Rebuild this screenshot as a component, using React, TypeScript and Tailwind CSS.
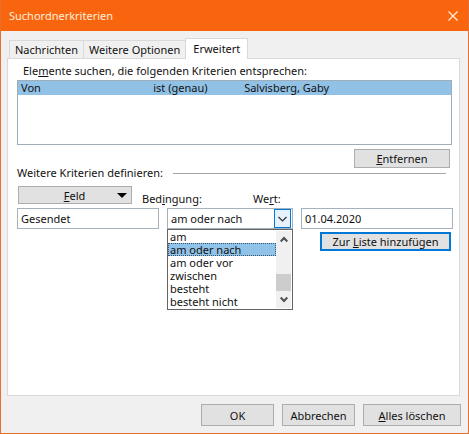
import { useState } from "react";

const tabs = ["Nachrichten", "Weitere Optionen", "Erweitert"];
const conditions = ["am", "am oder nach", "am oder vor", "zwischen", "besteht", "besteht nicht"];

const buttonStyle = "border border-[#adadad] bg-[#e1e1e1] text-center";
const fieldStyle = "h-[21px] w-full min-w-0 border border-[#a5b1bc] bg-white px-[3px] outline-none";

function TitleBar() {
    return (
        <header className="flex h-[31px] items-center justify-between bg-[#f9650f] pr-[10px] pl-2 text-[#fff0dc]">
            <h1>Suchordnerkriterien</h1>
            <button type="button" aria-label="Schließen">
                <svg width="10" height="10" viewBox="0 0 10 10" fill="none" stroke="currentColor" strokeWidth="1.2">
                    <path d="M0.5 0.5 9.5 9.5M9.5 0.5 0.5 9.5" />
                </svg>
            </button>
        </header>
    );
}

function TabBar({ active, onSelect }: { active: string; onSelect: (tab: string) => void }) {
    return (
        <div role="tablist" className="ml-[2px] flex items-end">
            {tabs.map((tab) => (
                <button
                    key={tab}
                    type="button"
                    role="tab"
                    aria-selected={tab === active}
                    onClick={() => onSelect(tab)}
                    className={
                        tab === active
                            ? "relative -mb-px h-[21px] border border-b-0 border-[#d9d9d9] bg-white px-[7px] pb-[2px]"
                            : "h-[18px] border border-r-0 border-b-0 border-[#d9d9d9] bg-[#f0f0f0] px-[5px]"
                    }
                >
                    {tab}
                </button>
            ))}
        </div>
    );
}

function ConditionSelect() {
    const [condition, setCondition] = useState("am oder nach");

    return (
        <div className="relative">
            <select
                id="condition"
                value={condition}
                onChange={(e) => setCondition(e.target.value)}
                className={`${fieldStyle} appearance-none`}
            >
                {conditions.map((c) => (
                    <option key={c}>{c}</option>
                ))}
            </select>
            <span className="pointer-events-none absolute top-px right-[2px] flex h-[19px] w-[17px] items-center justify-center border border-[#0078d7] bg-[#e5f1fb]">
                <svg width="9" height="6" viewBox="0 0 9 6" fill="none" stroke="#333" strokeWidth="1.2">
                    <path d="M0.5 1 4.5 5 8.5 1" />
                </svg>
            </span>

            <div className="absolute top-[21px] left-0 flex w-full border border-[#646464] bg-white">
                <ul role="listbox" aria-label="Bedingung" className="min-w-0 flex-1 pb-px leading-[13px]">
                    {conditions.map((c) => (
                        <li
                            key={c}
                            role="option"
                            aria-selected={c === condition}
                            onClick={() => setCondition(c)}
                            className={
                                c === condition
                                    ? "h-[13px] overflow-hidden bg-[#91c3e8] pl-[2px] outline-1 -outline-offset-1 outline-dotted outline-[#31536d]"
                                    : "h-[13px] overflow-hidden pl-[2px]"
                            }
                        >
                            {c}
                        </li>
                    ))}
                </ul>
                <div className="my-px mr-px flex w-[15px] flex-col items-center bg-[#f0f0f0]">
                    <svg width="8" height="17" viewBox="0 0 8 17" fill="none" stroke="#505050" strokeWidth="2">
                        <path d="M0.7 10.5 4 7 7.3 10.5" />
                    </svg>
                    <div className="mt-[26px] h-[17px] w-full bg-[#cdcdcd]" />
                    <svg width="8" height="17" viewBox="0 0 8 17" fill="none" stroke="#505050" strokeWidth="2">
                        <path d="M0.7 6.5 4 10 7.3 6.5" />
                    </svg>
                </div>
            </div>
        </div>
    );
}

export default function App() {
    const [activeTab, setActiveTab] = useState("Erweitert");

    return (
        <div className="flex min-h-screen flex-col border border-t-0 border-[#e5702e] bg-[#f0f0f0] font-['Noto_Sans','Open_Sans',sans-serif] text-[11px] leading-[15px] text-[#111]">
            <TitleBar />

            <main className="flex flex-1 flex-col px-[6px] pt-[7px] pr-[8px]">
                <TabBar active={activeTab} onSelect={setActiveTab} />

                <section role="tabpanel" className="flex-1 border border-[#d9d9d9] bg-white pt-[4px] pr-[6px] pl-[9px]">
                    <h2 id="criteria" className="pl-[6px]">
                        Ele<u>m</u>ente suchen, die folgenden Kriterien entsprechen:
                    </h2>
                    <div className="mt-[2px] mr-px h-[65px] border border-[#9dadba] bg-white">
                        <table aria-labelledby="criteria" className="w-full table-fixed text-left">
                            <tbody>
                                <tr className="h-[14px] bg-[#91c1e5] leading-[14px]">
                                    <td className="w-[31%] p-0 pl-[3px]">Von</td>
                                    <td className="w-[21%] p-0 pl-px">ist (genau)</td>
                                    <td className="p-0 pl-px">Salvisberg, Gaby</td>
                                </tr>
                            </tbody>
                        </table>
                    </div>

                    <div className="mt-[4px] mr-[3px] flex justify-end">
                        <button type="button" className={`${buttonStyle} h-[19px] w-24 leading-[17px]`}>
                            <u>E</u>ntfernen
                        </button>
                    </div>

                    <div className="mt-[-3px] mr-[7px] flex items-center gap-[10px]">
                        <h2>Weitere Kriterien definieren:</h2>
                        <div className="mt-[2px] h-px flex-1 bg-[#a0a8a8]" />
                    </div>

                    <div className="mt-[6px] flex h-[22px] items-start pl-px">
                        <button type="button" className={`${buttonStyle} flex h-[18px] w-[114px] items-center pr-[4px]`}>
                            <span className="flex-1 pl-[13px]">
                                <u>F</u>eld
                            </span>
                            <svg width="10" height="5" viewBox="0 0 10 5" fill="#000">
                                <path d="M0 0h10L5 5z" />
                            </svg>
                        </button>
                        <label htmlFor="condition" className="mt-[5px] ml-[10px] w-[111px]">
                            Bed<u>i</u>ngung:
                        </label>
                        <label htmlFor="value" className="mt-[5px]">
                            We<u>r</u>t:
                        </label>
                    </div>

                    <div className="grid grid-cols-[142fr_126fr_152fr] gap-2">
                        <input aria-label="Feld" defaultValue="Gesendet" className={fieldStyle} />
                        <ConditionSelect />
                        <input id="value" defaultValue="01.04.2020" className={fieldStyle} />
                    </div>

                    <div className="mt-[3px] mr-[2px] flex justify-end">
                        <button type="button" className="h-[19px] w-[131px] border-2 border-[#0078d7] bg-[#e1e1e1] leading-[15px]">
                            Zur <u>L</u>iste hinzufügen
                        </button>
                    </div>
                </section>
            </main>

            <footer className="flex justify-end gap-2 pt-2 pr-[7px] pb-[7px]">
                <button type="button" className={`${buttonStyle} h-[22px] w-[73px]`}>
                    OK
                </button>
                <button type="button" className={`${buttonStyle} h-[22px] w-[73px]`}>
                    Abbrechen
                </button>
                <button type="button" className={`${buttonStyle} h-[22px] w-[98px]`}>
                    <u>A</u>lles löschen
                </button>
            </footer>
        </div>
    );
}
